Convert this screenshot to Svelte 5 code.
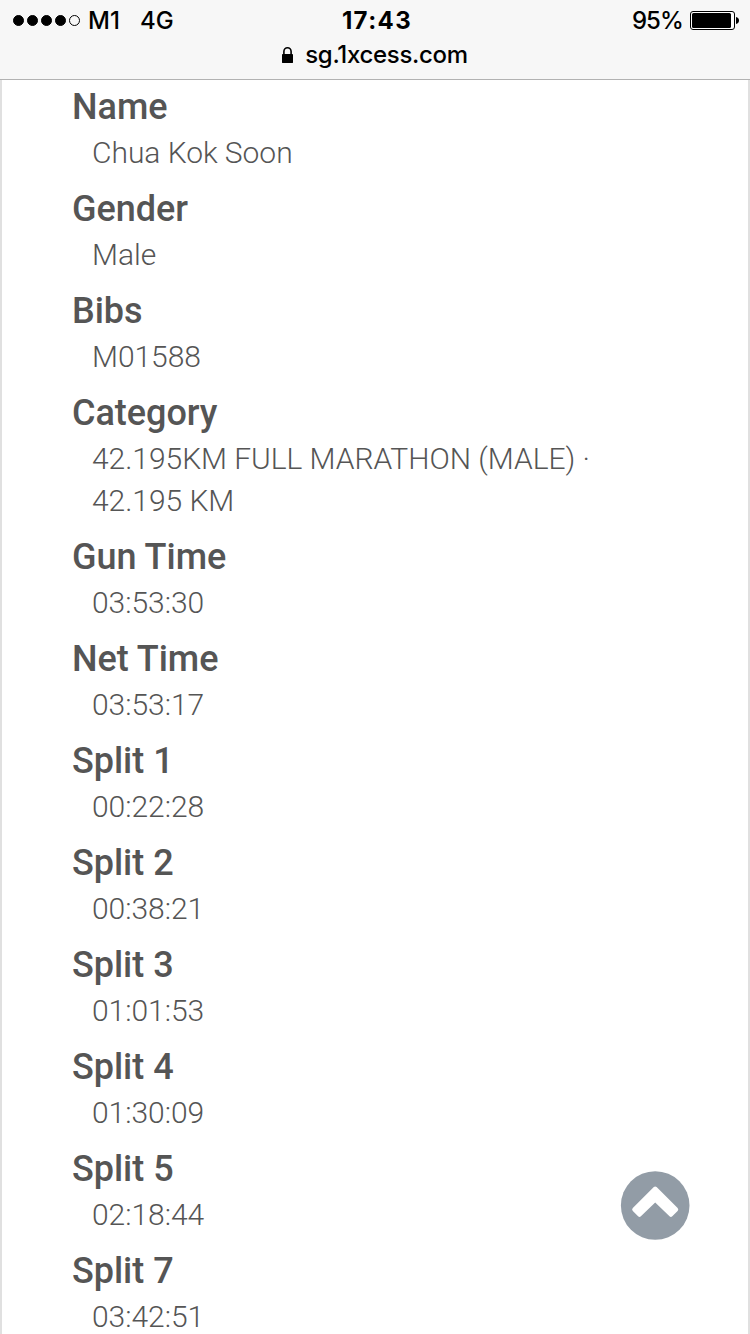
<script>
  const carrier = 'M1';
  const network = '4G';
  const signal = 4;

  const results = [
    { label: 'Name', value: 'Chua Kok Soon' },
    { label: 'Gender', value: 'Male' },
    { label: 'Bibs', value: 'M01588' },
    { label: 'Category', value: '42.195KM FULL MARATHON (MALE) · 42.195 KM' },
    { label: 'Gun Time', value: '03:53:30' },
    { label: 'Net Time', value: '03:53:17' },
    { label: 'Split 1', value: '00:22:28' },
    { label: 'Split 2', value: '00:38:21' },
    { label: 'Split 3', value: '01:01:53' },
    { label: 'Split 4', value: '01:30:09' },
    { label: 'Split 5', value: '02:18:44' },
    { label: 'Split 7', value: '03:42:51' }
  ];

  function scrollToTop() {
    window.scrollTo({ top: 0, behavior: 'smooth' });
  }
</script>

<div class="screen">
  <header class="browser-bar">
    <div class="status">
      <div class="status-left">
        <span class="signal">
          {#each Array(5) as _, i}
            <i class="dot" class:empty={i >= signal}></i>
          {/each}
        </span>
        <span class="carrier">{carrier}</span>
        <span class="network">{network}</span>
      </div>
      <span class="clock">17:43</span>
      <div class="status-right">
        <span class="percent">95%</span>
        <svg class="battery" width="49" height="19" viewBox="0 0 49 19">
          <rect x="0.5" y="0.5" width="44" height="18" rx="2.5" fill="#fff" stroke="#000" />
          <rect x="2" y="2" width="39" height="15" rx="1.5" />
          <path d="M46 6c4 .6 4 6.4 0 7z" />
        </svg>
      </div>
    </div>
    <div class="address">
      <svg class="lock" width="11" height="16" viewBox="0 0 11 16">
        <path d="M1.9 8V4.5a3.6 3.7 0 0 1 7.2 0V8" fill="none" stroke="#000" stroke-width="1.6" />
        <rect y="7" width="11" height="9" rx="0.4" />
      </svg>
      <span class="domain">sg.1xcess.com</span>
    </div>
  </header>

  <main class="page">
    <dl class="results">
      {#each results as item}
        <dt>{item.label}</dt>
        <dd>{item.value}</dd>
      {/each}
    </dl>
  </main>

  <button class="to-top" aria-label="Back to top" on:click={scrollToTop}>
    <svg width="70" height="70" viewBox="0 0 70 70">
      <circle cx="35.2" cy="35.5" r="34.3" fill="#929ca6" />
      <path
        d="M33.8 17.1Q35.2 15.7 36.6 17.1L57.6 38.1Q59 39.5 57.6 40.9L52.3 46.2Q50.9 47.6 49.5 46.2L35.2 32.4L20.9 46.2Q19.5 47.6 18.1 46.2L12.8 40.9Q11.4 39.5 12.8 38.1Z"
        fill="#fff"
      />
    </svg>
  </button>
</div>

<style>
  :global(body) {
    margin: 0;
    background: #fff;
  }

  .screen {
    position: relative;
    height: 1334px;
    overflow: hidden;
    display: flex;
    flex-direction: column;
    background: #fff;
  }

  .browser-bar {
    box-sizing: border-box;
    flex: none;
    height: 80px;
    background: #f7f7f7;
    border-bottom: 1px solid #b2b2b2;
    font-family: Inter, sans-serif;
    color: #000;
  }

  .status {
    display: grid;
    grid-template-columns: 1fr auto 1fr;
    align-items: center;
    height: 41px;
    padding: 0 11px 0 13px;
    font-size: 24px;
    font-weight: 500;
  }

  .status-left,
  .status-right,
  .signal {
    display: flex;
    align-items: center;
  }

  .signal {
    gap: 3px;
    margin-right: 8px;
  }

  .dot {
    box-sizing: border-box;
    width: 11px;
    height: 11px;
    border: 1px solid #000;
    border-radius: 50%;
    background: #000;
  }

  .dot.empty {
    background: none;
  }

  .network {
    margin-left: 20px;
  }

  .clock {
    padding-left: 2px;
    font-weight: 700;
    letter-spacing: 1.4px;
  }

  .status-right {
    justify-content: flex-end;
  }

  .percent {
    letter-spacing: -0.9px;
  }

  .battery {
    margin-left: 7px;
  }

  .address {
    display: flex;
    justify-content: center;
    align-items: center;
    height: 27px;
    font-size: 24px;
    font-weight: 500;
  }

  .domain {
    margin-left: 12px;
    letter-spacing: -0.3px;
  }

  .page {
    flex: 1;
    border: solid #e0e0e0;
    border-width: 0 2px;
    font-family: Roboto, sans-serif;
    color: #555;
  }

  .results {
    width: 560px;
    margin: 0;
    padding: 6px 0 0 70px;
  }

  dt {
    height: 42px;
    line-height: 42px;
    font-size: 36px;
    font-weight: 500;
    letter-spacing: -0.03px;
  }

  dd {
    margin: 4px 0 14px 20px;
    line-height: 42px;
    font-size: 30px;
    font-weight: 300;
    letter-spacing: -0.04px;
  }

  .to-top {
    position: absolute;
    left: 620px;
    top: 1170px;
    width: 70px;
    height: 70px;
    padding: 0;
    border: 0;
    background: none;
    cursor: pointer;
  }
</style>
